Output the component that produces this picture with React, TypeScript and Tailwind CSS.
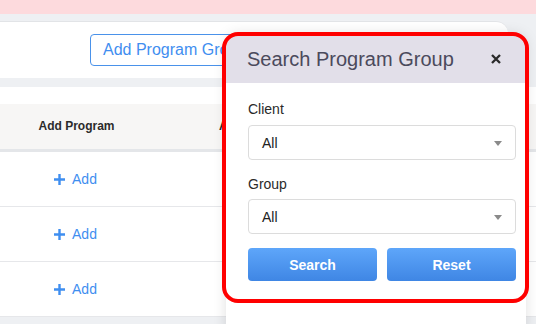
import React from "react";

const rows = [1, 2, 3];

function PlusIcon() {
  return (
    <svg width="11" height="11" viewBox="0 0 11 11" className="inline-block">
      <path d="M5.5 0v11M0 5.5h11" stroke="currentColor" strokeWidth="2.4" />
    </svg>
  );
}

function SelectBox({ value }: { value: string }) {
  return (
    <div className="flex h-[35px] items-center justify-between rounded-[4px] border border-[#dcdcdc] bg-white pl-[13px] pr-[13px] pt-[1px] text-[14px] text-[#222]">
      <span>{value}</span>
      <span className="h-0 w-0 border-x-[4px] border-t-[5px] border-x-transparent border-t-[#8a8a8a]" />
    </div>
  );
}

export default function App() {
  return (
    <div
      className="relative h-[324px] w-[536px] overflow-hidden bg-[#eef0f3]"
      style={{ fontFamily: '"Liberation Sans", Arial, sans-serif' }}
    >
      {/* page behind */}
      <div className="h-[14px] bg-[#fddadd]" />
      <div className="h-[7px]" />
      <div className="mr-[28px] flex h-[57px] items-start rounded-tr-[12px] border-t border-[#e2e4e7] bg-white pl-[90px] pt-[12px]">
        <button className="flex h-[32px] items-center whitespace-nowrap rounded-[4px] border border-[#4a92ea] px-[12px] text-[16px] text-[#3f8ef0]">
          Add Program Group
        </button>
      </div>
      <div className="h-[9px]" />
      <div className="bg-white pt-[17px]">
        <div className="flex h-[48px] items-center border-b-[3px] border-[#e4e6e9] bg-[#f7f6f5] pb-[2px] text-[12px] font-bold text-[#2b2b2b]">
          <div className="w-[153px] text-center">Add Program</div>
          <div className="pl-[66px]">Action</div>
        </div>
        {rows.map((r) => (
          <div
            key={r}
            className="flex h-[55px] items-center border-b border-[#e6e7ea]"
          >
            <div className="flex w-[151px] items-center justify-center gap-[7px] text-[14px] text-[#3f8ef0]">
              <PlusIcon />
              <span>Add</span>
            </div>
          </div>
        ))}
      </div>

      {/* search drawer */}
      <div className="absolute left-[226px] top-[34px] h-[300px] w-[300px] rounded-t-[12px] bg-white shadow-[0_0_14px_rgba(0,0,0,0.13)]">
        <div className="flex h-[49px] items-center justify-between rounded-t-[12px] bg-[#e2dfe9] pl-[21px] pr-[25px] pt-[1px]">
          <span className="text-[20px] text-[#4b4a5c]">Search Program Group</span>
          <svg width="10" height="10" viewBox="0 0 10 10">
            <path d="M1 1l8 8M9 1l-8 8" stroke="#2a2a2a" strokeWidth="2.3" />
          </svg>
        </div>
        <div className="pl-[22px] pr-[10px] pt-[16px] text-[14px] text-[#2a2a2a]">
          <div className="mb-[6px] h-[20px] leading-[20px]">Client</div>
          <SelectBox value="All" />
          <div className="mb-[5px] mt-[14px] h-[20px] leading-[20px]">Group</div>
          <SelectBox value="All" />
          <div className="mt-[14px] flex gap-[10px]">
            <button className="h-[33px] flex-1 rounded-[4px] bg-gradient-to-b from-[#5ea6fa] to-[#3f86e4] pt-[1px] text-[14px] font-bold text-white">
              Search
            </button>
            <button className="h-[33px] flex-1 rounded-[4px] bg-gradient-to-b from-[#5ea6fa] to-[#3f86e4] pt-[1px] text-[14px] font-bold text-white">
              Reset
            </button>
          </div>
        </div>
      </div>

      {/* highlight outline */}
      <div className="pointer-events-none absolute left-[222px] top-[32px] h-[271px] w-[307px] rounded-[16px] border-4 border-[#ff0000]" />
    </div>
  );
}
